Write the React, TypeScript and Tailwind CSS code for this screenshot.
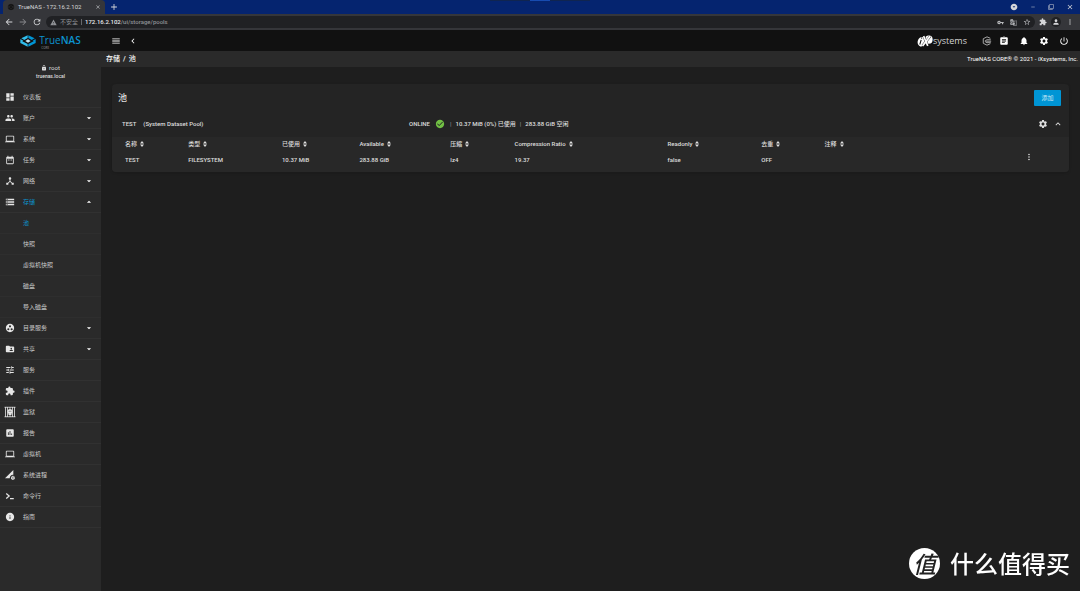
import { useState } from 'react';
import type { ReactNode } from 'react';
import {
  MdDashboard, MdGroup, MdLaptop, MdDateRange, MdDeviceHub, MdStorage, MdGroupWork,
  MdFolderShared, MdTune, MdExtension, MdAssessment, MdPermDataSetting,
  MdInfo, MdMenu, MdChevronLeft, MdAssignment, MdNotifications, MdSettings,
  MdPowerSettingsNew, MdLock, MdArrowDropDown, MdArrowDropUp, MdArrowBack, MdArrowForward,
  MdRefresh, MdWarning, MdClose, MdAdd, MdVpnKey, MdGTranslate, MdStarBorder, MdPerson,
  MdMoreVert, MdCheckCircle, MdExpandLess, MdRemove, MdFilterNone, MdArrowDropDownCircle,
} from 'react-icons/md';

function JailIcon() {
  return (
    <svg viewBox="0 0 24 24" className="-ml-px size-3 shrink-0" fill="none" stroke="currentColor" strokeWidth="1.6">
      <path d="M1 2.5h22M1 21.5h22M3 2v20M7 2v20M17 2v20M21 2v20" />
      <circle cx="12" cy="11" r="5" fill="currentColor" stroke="none" />
      <path d="M9 15h6v3H9z" fill="currentColor" stroke="none" />
      <path d="M12 2v4M12 18v4" />
      <path d="M9.5 10.5h1.6M12.9 10.5h1.6" stroke="#2a2a2a" />
    </svg>
  );
}

function PromptIcon() {
  return (
    <svg viewBox="0 0 24 24" className="size-2.5 shrink-0" fill="none" stroke="currentColor" strokeWidth="3">
      <path d="M3 6l7 6-7 6M12 18h9" />
    </svg>
  );
}

function TrueNasMark() {
  return (
    <svg viewBox="0 0 48 36" className="h-3 w-4 shrink-0">
      <path d="M23 1v8l-10 6-9-5z" fill="#31beec" />
      <path d="M25 1v8l10 6 9-5z" fill="#0095d5" />
      <path d="M1 12l9 5-3 2 16 8v8L1 24z" fill="#31beec" />
      <path d="M47 12l-9 5 3 2-16 8v8l22-11z" fill="#0095d5" />
      <path d="M24 13l8 5-8 5-8-5z" fill="#c4e6f3" />
    </svg>
  );
}

function SystemsMark() {
  return (
    <svg viewBox="0 0 46 34" className="h-3 w-4 shrink-0">
      <ellipse cx="13" cy="19" rx="11" ry="14" fill="#fff" transform="rotate(15 13 19)" />
      <ellipse cx="34" cy="13" rx="11" ry="12" fill="#fff" />
      <path d="M12 14l-4 13M14 7l-1 3" stroke="#111" strokeWidth="3" />
      <path d="M19 3l12 28M38 3L16 31" stroke="#111" strokeWidth="7" />
      <path d="M19 3l12 28M38 3L16 31" stroke="#fff" strokeWidth="5" />
    </svg>
  );
}

function CommandIcon() {
  return (
    <svg viewBox="0 0 24 24" className="size-2.5" fill="none" stroke="#a5a5a5" strokeWidth="2.4">
      <path d="M20 5.5L12 2 3 6.500v11L12 22l8-3.500" />
      <path d="M21 9h-9L8 11v3l4 2h9M10 12.500h12" />
    </svg>
  );
}

function SortIcon() {
  return (
    <svg viewBox="0 0 8 12" className="h-1.5 w-1 shrink-0" fill="currentColor">
      <path d="M4 0l4 5H0zM4 12l4-5H0z" />
    </svg>
  );
}

type Item = { label: string; icon: ReactNode; expandable?: boolean; children?: string[] };

const icon = 'size-2.5 shrink-0';

const items: Item[] = [
  { label: '仪表板', icon: <MdDashboard className={icon} /> },
  { label: '账户', icon: <MdGroup className={icon} />, expandable: true },
  { label: '系统', icon: <MdLaptop className={icon} />, expandable: true },
  { label: '任务', icon: <MdDateRange className={icon} />, expandable: true },
  { label: '网络', icon: <MdDeviceHub className={icon} />, expandable: true },
  {
    label: '存储', icon: <MdStorage className={icon} />, expandable: true,
    children: ['池', '快照', '虚拟机快照', '磁盘', '导入磁盘'],
  },
  { label: '目录服务', icon: <MdGroupWork className={icon} />, expandable: true },
  { label: '共享', icon: <MdFolderShared className={icon} />, expandable: true },
  { label: '服务', icon: <MdTune className={icon} /> },
  { label: '插件', icon: <MdExtension className={icon} /> },
  { label: '监狱', icon: <JailIcon /> },
  { label: '报告', icon: <MdAssessment className={icon} /> },
  { label: '虚拟机', icon: <MdLaptop className={icon} /> },
  { label: '系统进程', icon: <MdPermDataSetting className={icon} /> },
  { label: '命令行', icon: <PromptIcon /> },
  { label: '指南', icon: <MdInfo className={icon} /> },
];

function BrowserBar() {
  return (
    <div className="text-[#d5d6d9]">
      <div className="flex h-3.5 items-end justify-between bg-[#05246f]">
        <div className="flex h-full items-end">
          <div className="ml-[3px] flex h-3.5 w-[102px] items-center gap-[3px] rounded-t bg-[#35363a] px-1 text-[6px]">
            <svg viewBox="0 0 24 24" className="size-2 shrink-0" fill="#111" stroke="#4b4c50">
              <circle cx="12" cy="12" r="10" />
              <path d="M4 12l8-4 8 4-8 5z" />
            </svg>
            <span className="flex-1 whitespace-nowrap">TrueNAS - 172.16.2.102</span>
            <button aria-label="关闭标签页"><MdClose className="size-1.5" /></button>
          </div>
          <button aria-label="新标签页" className="ml-1 flex h-3.5 items-center"><MdAdd className="size-2.5" /></button>
        </div>
        <div className="mr-1.5 flex h-3.5 items-center gap-3">
          <MdArrowDropDownCircle className="size-2" />
          <button aria-label="最小化"><MdRemove className="size-1.5" /></button>
          <button aria-label="还原"><MdFilterNone className="size-1.5" /></button>
          <button aria-label="关闭"><MdClose className="size-2" /></button>
        </div>
      </div>
      <div className="flex h-4 items-center bg-[#35363a] pl-1 pr-1.5">
        <div className="flex w-10 items-center gap-1">
          <button aria-label="后退"><MdArrowBack className="size-2.5" /></button>
          <button aria-label="前进" className="text-[#85868a]"><MdArrowForward className="size-2.5" /></button>
          <button aria-label="刷新"><MdRefresh className="size-2.5" /></button>
        </div>
        <div className="ml-0.5 flex h-3 flex-1 items-center rounded-full bg-[#202124] px-1 text-[6px] text-[#8f9195]">
          <MdWarning className="mr-[3px] size-[7px]" />
          <span>不安全</span>
          <span className="mx-[3px] h-1.5 w-px bg-[#66686c]" />
          <a href="#pools" className="font-medium"><span className="text-[#e8eaed]">172.16.2.102</span>/ui/storage/pools</a>
          <span className="ml-auto flex items-center gap-1.5 text-[#b6b8bb]">
            <MdVpnKey className="size-[7px]" />
            <MdGTranslate className="size-[7px]" />
            <MdStarBorder className="size-2" />
          </span>
        </div>
        <div className="ml-1 flex items-center gap-1">
          <MdExtension className="size-2" />
          <span className="flex size-2.5 items-center justify-center rounded-full bg-[#202124]"><MdPerson className="size-2" /></span>
          <button aria-label="浏览器菜单" className="ml-px"><MdMoreVert className="size-2" /></button>
        </div>
      </div>
    </div>
  );
}

function Header() {
  return (
    <header className="flex h-[21px] shrink-0 items-center bg-[#111] text-white">
      <a href="#home" aria-label="TrueNAS CORE" className="flex w-[101px] items-center justify-center gap-[3px] text-[#0c94d0]">
        <TrueNasMark />
        <span className="flex flex-col pt-0.5 font-['Open_Sans'] text-[10px] leading-3">
          <span>True<b className="font-semibold">NAS</b></span>
          <span className="pl-0.5 text-[3px] leading-[4px] text-[#999]">CORE</span>
        </span>
      </a>
      <button aria-label="菜单" className="ml-2.5"><MdMenu className="size-2.5" /></button>
      <button aria-label="返回" className="ml-[7px]"><MdChevronLeft className="size-2.5" /></button>
      <div className="ml-auto mr-[11px] flex items-center gap-2.5">
        <div className="mr-[5px] flex items-center">
          <SystemsMark />
          <span className="font-['Open_Sans'] text-[9px] leading-3 text-[#d4d4d4]">systems</span>
        </div>
        <div className="flex items-center gap-[7px]">
          <button aria-label="TrueCommand"><CommandIcon /></button>
          <button aria-label="任务管理"><MdAssignment className="size-2.5" /></button>
        </div>
        <button aria-label="警报"><MdNotifications className="size-2.5" /></button>
        <button aria-label="设置"><MdSettings className="size-2.5" /></button>
        <button aria-label="电源"><MdPowerSettingsNew className="size-2.5" /></button>
      </div>
    </header>
  );
}

function Sidebar() {
  const [open, setOpen] = useState('存储');
  return (
    <aside className="w-[101px] shrink-0 bg-[#2a2a2a] text-[6px] text-[#c8c8c8]">
      <div className="flex h-9 flex-col items-center justify-end pb-[7px] text-[#dedede]">
        <div className="flex h-2 items-center gap-0.5"><MdLock className="size-1.5" />root</div>
        <div className="h-2 text-[5px] font-medium leading-[8px]">truenas.local</div>
      </div>
      <nav>
        {items.map((item) => {
          const active = open === item.label;
          return (
            <div key={item.label}>
              <button
                onClick={() => item.children && setOpen(active ? '' : item.label)}
                className="flex h-[21px] w-full items-center border-b border-[#313131] pl-[5px] pr-[7px] text-left"
              >
                <span className="flex w-[18px] items-center text-[#e6e6e6]">{item.icon}</span>
                <span className={active ? 'flex-1 text-[#0c94d0]' : 'flex-1'}>{item.label}</span>
                {item.expandable && (active ? <MdArrowDropUp className="size-2.5 text-white" /> : <MdArrowDropDown className="size-2.5 text-white" />)}
              </button>
              {active && item.children?.map((child, index) => (
                <a
                  key={child}
                  href="#pools"
                  className={`flex h-[21px] items-center border-b border-[#2e2e2e] pl-[23px] ${index === 0 ? 'text-[#0c94d0]' : ''}`}
                >
                  {child}
                </a>
              ))}
            </div>
          );
        })}
      </nav>
    </aside>
  );
}

const columns = [
  { name: '名称', value: 'TEST', width: 'w-[6.6%]' },
  { name: '类型', value: 'FILESYSTEM', width: 'w-[9.8%]' },
  { name: '已使用', value: '10.37 MiB', width: 'w-[8.1%]' },
  { name: 'Available', value: '283.88 GiB', width: 'w-[9.5%]' },
  { name: '压缩', value: 'lz4', width: 'w-[6.7%]' },
  { name: 'Compression Ratio', value: '19.37', width: 'w-[16%]' },
  { name: 'Readonly', value: 'false', width: 'w-[9.8%]' },
  { name: '去重', value: 'OFF', width: 'w-[6.6%]' },
  { name: '注释', value: '', width: 'w-[21.4%]' },
];

function PoolCard() {
  return (
    <section className="mx-[11px] mt-[17px] overflow-hidden rounded-sm bg-[#242424] shadow">
      <div className="flex h-[27px] items-center justify-between pl-1.5 pr-2">
        <h1 className="text-[9px] font-medium">池</h1>
        <button className="h-4 w-[27px] rounded-[1px] bg-[#0095d5] text-[6px] text-[#cdeaf7]">添加</button>
      </div>
      <div className="flex h-[26px] items-center pl-2.5 pr-1.5 text-[6px] font-medium">
        <div className="flex w-[30.5%] gap-[7px]"><span>TEST</span><span>(System Dataset Pool)</span></div>
        <div className="flex items-center gap-[5px]">
          <span>ONLINE</span>
          <MdCheckCircle className="size-2.5 text-[#71bf44]" />
          <span className="-mr-px text-[#999]">|</span>
          <span>10.37 MiB (0%) 已使用</span>
          <span className="-mx-px text-[#999]">|</span>
          <span>283.88 GiB 空闲</span>
        </div>
        <div className="ml-auto flex items-center gap-[5px]">
          <button aria-label="存储池设置"><MdSettings className="size-2.5" /></button>
          <button aria-label="折叠"><MdExpandLess className="size-2.5" /></button>
        </div>
      </div>
      <div className="bg-[#282828] pb-[3px]">
        <table className="w-full table-fixed text-left text-[6px] font-medium">
          <thead>
            <tr className="h-3.5">
              {columns.map((column) => (
                <th key={column.name} scope="col" className={`${column.width} whitespace-nowrap p-0 pl-[13px] font-medium`}>
                  <span className="flex items-center gap-[3px]">{column.name}<SortIcon /></span>
                </th>
              ))}
              <th />
            </tr>
          </thead>
          <tbody>
            <tr className="h-[18px]">
              {columns.map((column) => (
                <td key={column.name} className="whitespace-nowrap p-0 pl-[13px]">{column.value}</td>
              ))}
              <td className="p-0 pl-2 pt-px align-top">
                <button aria-label="更多操作" className="block"><MdMoreVert className="size-2.5" /></button>
              </td>
            </tr>
          </tbody>
        </table>
      </div>
    </section>
  );
}

export default function App() {
  return (
    <div lang="zh-CN" className="flex min-h-screen flex-col bg-[#1e1e1e] font-[Roboto,'Noto_Sans_CJK_SC',sans-serif] text-[6px] leading-[8px] text-[#dedede]">
      <BrowserBar />
      <Header />
      <div className="flex flex-1">
        <Sidebar />
        <main className="min-w-0 flex-1">
          <div className="flex h-4 items-center justify-between bg-[#2a2a2a] pl-[5px] pr-0.5 text-white">
            <nav className="flex gap-[3px] text-[7px] font-medium"><a href="#storage">存储</a><span>/</span><a href="#pools">池</a></nav>
            <span>TrueNAS CORE® © 2021 - iXsystems, Inc.</span>
          </div>
          <PoolCard />
        </main>
      </div>
      <div className="fixed left-1/2 top-0 flex h-px w-[100px] -translate-x-1/2 justify-center bg-[#102550]">
        <span className="h-px w-5 bg-[#174bb0]" />
      </div>
      <div className="fixed bottom-3 right-2.5 flex items-center gap-2.5 font-['Noto_Sans_CJK_SC',sans-serif] font-medium text-white">
        <span className="flex size-[31px] items-center justify-center rounded-full bg-white text-[23px] italic leading-8 text-[#222]">值</span>
        <span className="text-[24px] leading-8">什么值得买</span>
      </div>
    </div>
  );
}
